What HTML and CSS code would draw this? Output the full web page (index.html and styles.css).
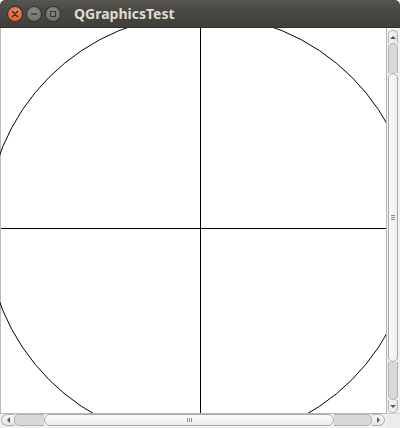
FILE: index.html
```html
<!DOCTYPE html>
<html>
<head>
<meta charset="utf-8">
<link rel="stylesheet" href="styles.css">
</head>
<body>
<div class="window">
  <div class="titlebar">
    <div class="btns">
      <span class="wbtn close"><svg width="14" height="14" viewBox="0 0 14 14"><path d="M4.5 4.5 L9.5 9.5 M9.5 4.5 L4.5 9.5" stroke="#3a2a22" stroke-width="1.6" stroke-linecap="round"/></svg></span>
      <span class="wbtn"><svg width="14" height="14" viewBox="0 0 14 14"><path d="M4 7 H10" stroke="#3c3b37" stroke-width="1.6"/></svg></span>
      <span class="wbtn"><svg width="14" height="14" viewBox="0 0 14 14"><rect x="4.5" y="4.5" width="5" height="5" fill="none" stroke="#3c3b37" stroke-width="1.2"/></svg></span>
    </div>
    <span class="title">QGraphicsTest</span>
  </div>
  <div class="client">
    <div class="mainrow">
      <div class="view">
        <svg width="386" height="385" viewBox="0 0 386 385">
          <line x1="0.5" y1="0" x2="0.5" y2="385" stroke="#bdbab5" stroke-width="1"/>
          <circle cx="200.5" cy="200.5" r="214" fill="none" stroke="#000" stroke-width="1"/>
          <line x1="200.5" y1="0" x2="200.5" y2="385" stroke="#000" stroke-width="1"/>
          <line x1="1" y1="200.5" x2="386" y2="200.5" stroke="#000" stroke-width="1"/>
        </svg>
      </div>
      <div class="vscroll">
        <div class="vbtn up"><span class="arrow-up"></span></div>
        <div class="vtrack t1"></div>
        <div class="vhandle"><span class="grip"></span><span class="grip"></span><span class="grip"></span></div>
        <div class="vtrack t2"></div>
        <div class="vbtn down"><span class="arrow-down"></span></div>
      </div>
    </div>
    <div class="bottomrow">
      <div class="hscroll">
        <div class="hbtn left"><span class="arrow-left"></span></div>
        <div class="htrack h1"></div>
        <div class="hhandle"><span class="hgrip"></span><span class="hgrip"></span><span class="hgrip"></span></div>
        <div class="htrack h2"></div>
        <div class="hbtn right"><span class="arrow-right"></span></div>
      </div>
      <div class="corner"></div>
    </div>
  </div>
</div>
</body>
</html>
```

FILE: styles.css
```css
html, body {
  margin: 0;
  padding: 0;
  background: #ffffff;
}
.window {
  width: 400px;
  height: 428px;
  display: flex;
  flex-direction: column;
  overflow: hidden;
}
.titlebar {
  height: 28px;
  flex: 0 0 28px;
  background: linear-gradient(#57554f, #4a4843 40%, #403f3b);
  border-radius: 5px 5px 0 0;
  display: flex;
  align-items: center;
  box-sizing: border-box;
  border-bottom: 1px solid #2f2e2b;
}
.btns {
  display: flex;
  gap: 5px;
  margin-left: 8px;
}
.wbtn {
  width: 14px;
  height: 14px;
  border-radius: 50%;
  background: radial-gradient(circle at 50% 35%, #8c8a85, #6a6864);
  box-shadow: 0 0 0 1px #33322f;
  display: flex;
}
.wbtn.close {
  background: radial-gradient(circle at 50% 35%, #f58a5f, #e0501f);
}
.title {
  margin-left: 14px;
  font-family: "Noto Sans", "DejaVu Sans", sans-serif;
  font-weight: bold;
  font-size: 14px;
  color: #dfdbd2;
}
.client {
  flex: 1;
  display: flex;
  flex-direction: column;
  background: #edecea;
}
.mainrow {
  display: flex;
  height: 385px;
}
.view {
  width: 386px;
  height: 385px;
  background: #ffffff;
}
.view svg {
  display: block;
}
.vscroll {
  width: 14px;
  box-sizing: border-box;
  background: #f2f1f0;
  border-left: 1px solid #b9b7b3;
  display: flex;
  flex-direction: column;
  padding: 2px 2px 0 1px;
}
.vbtn {
  height: 12px;
  background: linear-gradient(90deg, #f6f6f5, #e6e5e3);
  border: 1px solid #b3b1ad;
  display: flex;
  align-items: center;
  justify-content: center;
}
.vbtn.up {
  border-radius: 6px 6px 0 0;
  border-bottom: none;
}
.vbtn.down {
  border-radius: 0 0 6px 6px;
  border-top: none;
}
.vtrack {
  background: #d9d8d6;
  border-left: 1px solid #b3b1ad;
  border-right: 1px solid #b3b1ad;
}
.vtrack.t1 {
  height: 29px;
  border-radius: 5px 5px 0 0;
  border-top: 1px solid #b3b1ad;
}
.vtrack.t2 {
  flex: 1;
  border-radius: 0 0 5px 5px;
  border-bottom: 1px solid #b3b1ad;
}
.vhandle {
  height: 289px;
  box-sizing: border-box;
  background: linear-gradient(90deg, #fbfbfb, #eeedec);
  border: 1px solid #a9a7a3;
  border-radius: 6px;
  display: flex;
  flex-direction: column;
  align-items: center;
  justify-content: center;
  gap: 1px;
}
.grip {
  width: 4px;
  height: 1px;
  background: #8e8c88;
}
.arrow-up {
  width: 0;
  height: 0;
  border-left: 3px solid transparent;
  border-right: 3px solid transparent;
  border-bottom: 3px solid #5a5955;
}
.arrow-down {
  width: 0;
  height: 0;
  border-left: 3px solid transparent;
  border-right: 3px solid transparent;
  border-top: 3px solid #5a5955;
}
.bottomrow {
  display: flex;
  height: 15px;
}
.hscroll {
  width: 386px;
  box-sizing: border-box;
  background: #f2f1f0;
  border-top: 1px solid #b9b7b3;
  display: flex;
  padding: 0 1px 2px 1px;
}
.hbtn {
  width: 13px;
  background: linear-gradient(#f6f6f5, #e6e5e3);
  border: 1px solid #b3b1ad;
  display: flex;
  align-items: center;
  justify-content: center;
  box-sizing: border-box;
}
.hbtn.left {
  border-radius: 6px 0 0 6px;
  border-right: none;
}
.hbtn.right {
  border-radius: 0 6px 6px 0;
  border-left: none;
}
.htrack {
  background: #d9d8d6;
  border-top: 1px solid #b3b1ad;
  border-bottom: 1px solid #b3b1ad;
}
.htrack.h1 {
  width: 29px;
  border-radius: 5px 0 0 5px;
  border-left: 1px solid #b3b1ad;
}
.htrack.h2 {
  flex: 1;
  border-radius: 0 5px 5px 0;
  border-right: 1px solid #b3b1ad;
}
.hhandle {
  width: 290px;
  box-sizing: border-box;
  background: linear-gradient(#fbfbfb, #eeedec);
  border: 1px solid #a9a7a3;
  border-radius: 6px;
  display: flex;
  align-items: center;
  justify-content: center;
  gap: 1px;
}
.hgrip {
  width: 1px;
  height: 4px;
  background: #8e8c88;
}
.arrow-left {
  width: 0;
  height: 0;
  border-top: 3px solid transparent;
  border-bottom: 3px solid transparent;
  border-right: 3px solid #5a5955;
}
.arrow-right {
  width: 0;
  height: 0;
  border-top: 3px solid transparent;
  border-bottom: 3px solid transparent;
  border-left: 3px solid #5a5955;
}
.corner {
  flex: 1;
  background: #edecea;
  border-top: 1px solid #d0cecb;
}
```
